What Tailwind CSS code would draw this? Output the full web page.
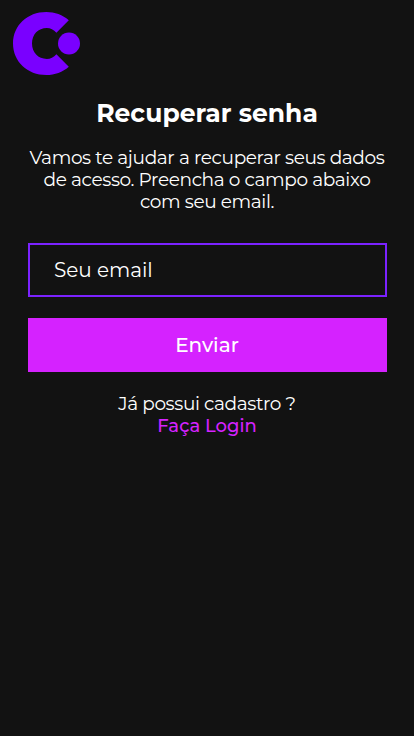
<!DOCTYPE html>
<html lang="pt-BR">
<head>
<meta charset="utf-8">
<meta name="viewport" content="width=device-width, initial-scale=1">
<title>Recuperar senha</title>
<script src="https://cdn.jsdelivr.net/npm/@tailwindcss/browser@4"></script>
</head>
<body class="min-h-screen bg-[#121212] font-[Montserrat,Inter,sans-serif] text-white">
<header class="pt-3 pl-[13px]">
<svg class="block h-[63px] w-[67px]" viewBox="0 0 67 63" fill="#7a00ff" aria-label="Logo">
<path d="M55.8 8.3C49.7 2.8 41.8 0 33.3 0C14.4 0 0 13.3 0 31.5S14.4 63 33.3 63C41.8 63 49.7 60.2 55.8 54.7L43.4 42.2C40.8 45.2 37.4 46.9 33.8 46.9C25.2 46.9 19 40.6 19 31.5S25.2 16.1 33.8 16.1C37.4 16.1 40.8 17.8 43.4 20.8Z"/>
<circle cx="56" cy="31.5" r="11"/>
</svg>
</header>
<main class="flex flex-col items-center px-7 pt-[22px] text-center">
<h1 class="text-[25px] leading-8 font-bold tracking-[0.03px] whitespace-nowrap">Recuperar senha</h1>
<p class="mt-[18px] flex flex-col items-center text-[18.5px] leading-[22px] tracking-[-0.37px] whitespace-nowrap"><span>Vamos te ajudar a recuperar seus dados</span><span>de acesso. Preencha o campo abaixo</span><span>com seu email.</span></p>
<form class="mt-[30px] flex w-[359px] flex-col gap-[21px]">
<input class="h-[54px] border-2 border-[#7b22ff] px-[24.6px] text-[20px] tracking-[-0.05px] outline-none placeholder:text-white" type="email" placeholder="Seu email">
<button class="h-[54px] bg-[#d522ff] text-[20px] font-[550]" type="button">Enviar</button>
</form>
<p class="mt-[21px] text-[18.5px] leading-[22px] tracking-[-0.38px]"><span>Já possui cadastro ?</span></p>
<a class="text-[18px] leading-[22px] font-[550] text-[#d522ff]" href="#">Faça Login</a>
</main>
</body>
</html>
